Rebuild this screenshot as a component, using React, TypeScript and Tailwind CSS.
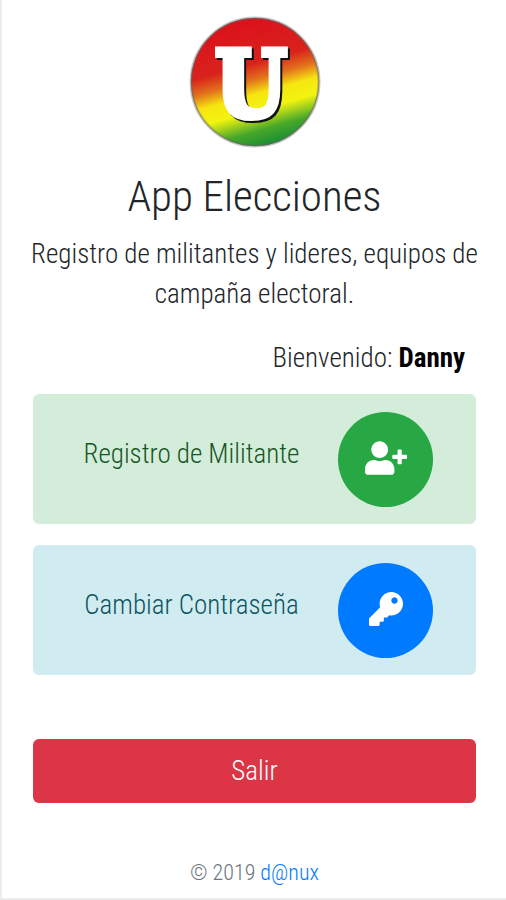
import React from 'react';
import { FaUserPlus, FaKey } from 'react-icons/fa';

interface ActionCardProps {
  label: string;
  icon: React.ElementType;
  cardClass: string;
  buttonClass: string;
}

function Logo() {
  return (
    <svg className="w-33 h-33" viewBox="0 0 132 132" role="img" aria-label="Logo">
      <defs>
        <linearGradient id="flag" x1="0.36" y1="0" x2="0.64" y2="1">
          <stop offset="0" stopColor="#dc101c" />
          <stop offset="0.36" stopColor="#d8221c" />
          <stop offset="0.48" stopColor="#e2701c" />
          <stop offset="0.59" stopColor="#f6e610" />
          <stop offset="0.71" stopColor="#f2f410" />
          <stop offset="0.86" stopColor="#48a82a" />
          <stop offset="1" stopColor="#128a34" />
        </linearGradient>
      </defs>
      <circle cx="66" cy="66" r="64" fill="url(#flag)" />
      <circle cx="66" cy="66" r="64" fill="none" stroke="#6b6460" strokeOpacity="0.35" strokeWidth="3" />
      <circle cx="66" cy="66" r="64" fill="none" stroke="#6b6460" strokeOpacity="0.6" strokeWidth="1" />
      <text
        x="62"
        y="101"
        className="drop-shadow-[2px_2px_0_#111111]"
        fontFamily="'DejaVu Serif Condensed', 'DejaVu Serif', serif"
        fontWeight="700"
        fontSize="91"
        textAnchor="middle"
        fill="#ffffff"
        stroke="#ffffff"
        strokeWidth="6"
      >
        U
      </text>
    </svg>
  );
}

function ActionCard({ label, icon: Icon, cardClass, buttonClass }: ActionCardProps) {
  return (
    <div className={`flex items-center rounded-md pt-[18px] pb-[17px] pl-3 pr-[43px] ${cardClass}`}>
      <span className="flex-1 pb-[11px] text-center">{label}</span>
      <button
        type="button"
        aria-label={label}
        className={`flex size-[95px] shrink-0 items-center justify-center rounded-full pb-1 text-white ${buttonClass}`}
      >
        <Icon className="h-[34px] w-[42px]" />
      </button>
    </div>
  );
}

export default function App() {
  return (
    <div className="min-h-screen border-b-2 border-l-2 border-[#ececec] bg-white pl-[31px] pr-[30px] pt-4 font-['Roboto_Condensed',Roboto,sans-serif] text-[27px] leading-10 font-light text-[#212529]">
      <header className="flex flex-col items-center text-center">
        <Logo />
        <h1 className="mt-5 text-[43px] leading-[56px] font-light">App Elecciones</h1>
        <p className="-mx-3 mt-[10px]">
          Registro de militantes y lideres, equipos de campaña electoral.
        </p>
      </header>

      <p className="mt-6 pr-[11px] text-right">
        Bienvenido: <strong className="font-bold text-black">Danny</strong>
      </p>

      <main className="mt-4 flex flex-col gap-[21px]">
        <ActionCard
          label="Registro de Militante"
          icon={FaUserPlus}
          cardClass="bg-[#d4edda] text-[#155724]"
          buttonClass="bg-[#28a745]"
        />
        <ActionCard
          label="Cambiar Contraseña"
          icon={FaKey}
          cardClass="bg-[#d1ecf1] text-[#0c5460]"
          buttonClass="bg-[#007bff]"
        />
      </main>

      <button type="button" className="mt-16 h-16 w-full rounded-md bg-[#dc3545] text-white">
        Salir
      </button>

      <footer className="mt-[50px] text-center text-[22px] text-[#6c757d]">
        © 2019 <a href="#" className="text-[#007bff]">d@nux</a>
      </footer>
    </div>
  );
}
